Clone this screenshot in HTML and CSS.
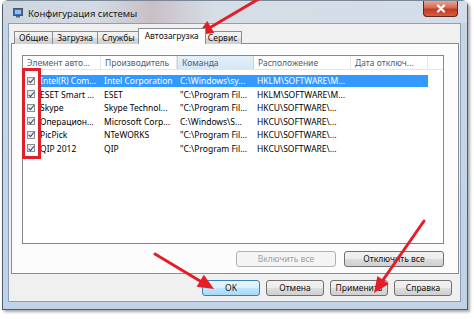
FILE: index.html
```html
<!DOCTYPE html>
<html>
<head>
    <title>Конфигурация системы</title>
    <link rel="stylesheet" href="styles.css">
</head>
<body>
    <div class="window">
        <div class="titlebar">
            <svg class="app-icon" width="10" height="10" viewBox="0 0 10 10">
                <rect x="0.5" y="0.5" width="9" height="7" fill="#3b6fb4" stroke="#4a5566"/>
                <rect x="2" y="2" width="6" height="4" fill="#8fc0ef"/>
                <rect x="3" y="8" width="4" height="1.5" fill="#5b6676"/>
            </svg>
            <span class="title">Конфигурация системы</span>
            <div class="close">
                <svg width="10" height="9" viewBox="0 0 10 9">
                    <path d="M2 1.5 L8 7.5 M8 1.5 L2 7.5" stroke="#fff" stroke-width="2.2" stroke-linecap="round"/>
                </svg>
            </div>
        </div>
        <div class="client">
            <div class="tabs">
                <div class="tab">Общие</div>
                <div class="tab">Загрузка</div>
                <div class="tab">Службы</div>
                <div class="tab active">Автозагрузка</div>
                <div class="tab">Сервис</div>
            </div>
            <div class="panel">
                <div class="list">
                    <div class="list-head">
                        <div class="hcell c1">Элемент авто...</div>
                        <div class="hcell c2">Производитель</div>
                        <div class="hcell c3 sorted">Команда</div>
                        <div class="hcell c4">Расположение</div>
                        <div class="hcell c5">Дата отключ...</div>
                    </div>
                    <div class="row sel">
                        <span class="chk"></span>
                        <div class="cells">
                            <span class="d1">Intel(R) Com...</span>
                            <span class="d2">Intel Corporation</span>
                            <span class="d3">C:\Windows\sy...</span>
                            <span class="d4">HKLM\SOFTWARE\M...</span>
                            <span class="d5"></span>
                        </div>
                    </div>
                    <div class="row">
                        <span class="chk"></span>
                        <div class="cells">
                            <span class="d1">ESET Smart ...</span>
                            <span class="d2">ESET</span>
                            <span class="d3">"C:\Program Fil...</span>
                            <span class="d4">HKLM\SOFTWARE\M...</span>
                            <span class="d5"></span>
                        </div>
                    </div>
                    <div class="row">
                        <span class="chk"></span>
                        <div class="cells">
                            <span class="d1">Skype</span>
                            <span class="d2">Skype Technol...</span>
                            <span class="d3">"C:\Program Fil...</span>
                            <span class="d4">HKCU\SOFTWARE\...</span>
                            <span class="d5"></span>
                        </div>
                    </div>
                    <div class="row">
                        <span class="chk"></span>
                        <div class="cells">
                            <span class="d1">Операцион...</span>
                            <span class="d2">Microsoft Corp...</span>
                            <span class="d3">C:\Windows\S...</span>
                            <span class="d4">HKCU\SOFTWARE\...</span>
                            <span class="d5"></span>
                        </div>
                    </div>
                    <div class="row">
                        <span class="chk"></span>
                        <div class="cells">
                            <span class="d1">PicPick</span>
                            <span class="d2">NTeWORKS</span>
                            <span class="d3">"C:\Program Fil...</span>
                            <span class="d4">HKCU\SOFTWARE\...</span>
                            <span class="d5"></span>
                        </div>
                    </div>
                    <div class="row">
                        <span class="chk"></span>
                        <div class="cells">
                            <span class="d1">QIP 2012</span>
                            <span class="d2">QIP</span>
                            <span class="d3">"C:\Program Fil...</span>
                            <span class="d4">HKCU\SOFTWARE\...</span>
                            <span class="d5"></span>
                        </div>
                    </div>
                </div>
                <div class="panel-buttons">
                    <div class="btn wide disabled">Включить все</div>
                    <div class="btn wide">Отключить все</div>
                </div>
            </div>
            <div class="dialog-buttons">
                <div class="btn default">OK</div>
                <div class="btn">Отмена</div>
                <div class="btn">Применить</div>
                <div class="btn">Справка</div>
            </div>
        </div>
    </div>

    <!-- пометки поверх скриншота -->
    <svg class="marks" width="474" height="319" viewBox="0 0 474 319">
        <rect x="23.5" y="69.5" width="16" height="88" fill="none" stroke="#e0202a" stroke-width="3"/>
        <g stroke="#e41e26" stroke-width="3" stroke-linecap="round">
            <line x1="262" y1="-3" x2="211" y2="27"/>
            <line x1="155" y1="254" x2="200" y2="281"/>
            <line x1="424" y1="221" x2="383" y2="280"/>
        </g>
        <g fill="#e41e26">
            <polygon points="197,35 214.3,32.9 207.3,20.9"/>
            <polygon points="214,289 196.6,286.8 203.8,274.8"/>
            <polygon points="374,293 388.8,283.9 377.4,275.9"/>
        </g>
    </svg>
</body>
</html>
```

FILE: styles.css
```css
body {
    margin: 0;
    background: #ffffff;
    position: relative;
    width: 474px;
    height: 319px;
    overflow: hidden;
    font-family: "Noto Sans", "Open Sans", sans-serif;
    font-size: 9px;
    color: #000;
}

/* рамка окна */
.window {
    margin-left: 2px;
    width: 466px;
    height: 310px;
    box-sizing: border-box;
    border: 1px solid #4e5d6e;
    border-top-color: #7a8796;
    border-radius: 6px 6px 0 0;
    background: linear-gradient(#c8d3df, #c5d6e8 30%, #bfd2e7);
    padding: 0 6px 6px 5px;
    box-shadow: 2px 2px 3px rgba(0, 0, 0, 0.35);
}

.titlebar {
    height: 22px;
    display: flex;
    align-items: center;
    background: linear-gradient(90deg, #cdd6e0 0%, #d4dbe4 20%, #c9bfc6 32%, #d6dde6 45%, #d3dde8 100%);
    margin: 0 -6px 0 -5px;
    padding: 0 9px 0 10px;
}

.app-icon {
    margin-top: 2px;
}

.title {
    margin-left: 5px;
    margin-top: 3px;
    font-size: 9.5px;
    color: #1a1a1a;
}

.close {
    margin-left: auto;
    align-self: flex-start;
    width: 35px;
    height: 16px;
    box-sizing: border-box;
    border: 1px solid #5d2a20;
    border-top: none;
    border-radius: 0 0 4px 4px;
    background: linear-gradient(#e8a496, #d46a55 45%, #c23a22 55%, #d65d3e);
    display: flex;
    align-items: center;
    justify-content: center;
}

/* клиентская область */
.client {
    height: 279px;
    box-sizing: border-box;
    border: 1px solid #8c9fb4;
    background: #f0f0f0;
    padding: 5px 2px 0 2px;
}

.tabs {
    display: flex;
    align-items: flex-end;
    height: 15px;
    padding-left: 4px;
    margin-bottom: -1px;
}

.tab {
    height: 13px;
    box-sizing: border-box;
    border: 1px solid #898c95;
    border-bottom: none;
    margin-left: -1px;
    padding: 0 4px;
    background: linear-gradient(#f3f3f3, #ebebeb 50%, #dddddd 50%, #cfcfcf);
    font-size: 8.5px;
    line-height: 12px;
    color: #111;
}

.tab.active {
    position: relative;
    z-index: 1;
    height: 16px;
    margin: 0 -2px 0 -2px;
    padding: 0 6px;
    background: #fff;
    line-height: 13px;
}

.panel {
    width: 448px;
    height: 231px;
    box-sizing: border-box;
    border: 1px solid #898c95;
    background: #fcfcfc;
    padding: 11px 0 0 10px;
}

.list {
    width: 422px;
    height: 189px;
    box-sizing: border-box;
    border: 1px solid #828790;
    background: #fff;
    font-size: 8.5px;
}

.list-head {
    display: flex;
    height: 13px;
    border-bottom: 1px solid #e5e5e5;
    color: #4c607a;
    margin-bottom: 4px;
}

.hcell {
    box-sizing: border-box;
    padding-left: 4px;
    line-height: 13px;
    border-right: 1px solid #e3e8ee;
    white-space: nowrap;
    overflow: hidden;
}

.hcell.sorted {
    background: linear-gradient(#e3f0fa, #d5e7f7);
    border-left: 1px solid #c0d5ea;
    border-right-color: #c0d5ea;
}

.c1 { width: 78px; }
.c2 { width: 76px; }
.c3 { width: 77px; }
.c4 { width: 97px; }
.c5 { width: 77px; }

.row {
    display: flex;
    align-items: center;
    height: 13.5px;
}

.chk {
    width: 8px;
    height: 8px;
    box-sizing: border-box;
    margin-left: 4px;
    margin-right: 3px;
    border: 1px solid #8e8f8f;
    background: linear-gradient(135deg, #e0e0e0, #fafafa);
    position: relative;
}

.chk::after {
    content: "";
    position: absolute;
    left: 1.5px;
    top: -0.5px;
    width: 2px;
    height: 4.5px;
    border: solid #1e3f7a;
    border-width: 0 1.5px 1.5px 0;
    transform: rotate(40deg);
}

.cells {
    display: flex;
    height: 12.5px;
    align-items: center;
    white-space: nowrap;
}

.cells span {
    overflow: hidden;
    box-sizing: border-box;
    padding-left: 3px;
}

.d1 { width: 63px; padding-left: 2px !important; }
.d2 { width: 76px; }
.d3 { width: 77px; }
.d4 { width: 97px; }
.d5 { width: 77px; }

.row.sel .cells {
    background: #3399ff;
    color: #fff;
}

/* кнопки */
.btn {
    width: 58px;
    height: 16px;
    box-sizing: border-box;
    border: 1px solid #707070;
    border-radius: 3px;
    background: linear-gradient(#f2f2f2, #ebebeb 50%, #dddddd 50%, #cfcfcf);
    font-size: 8.5px;
    line-height: 14px;
    text-align: center;
    color: #111;
}

.btn.wide {
    width: 100px;
}

.btn.disabled {
    border-color: #adb2b5;
    background: #f4f4f4;
    color: #a0a0a0;
}

.btn.default {
    border-color: #3c7fb1;
    background: linear-gradient(#eaf6fd, #d9f0fc 50%, #bee6fd 50%, #a7d9f5);
}

.panel-buttons {
    display: flex;
    gap: 8px;
    justify-content: flex-end;
    width: 422px;
    margin-top: 7px;
}

.dialog-buttons {
    display: flex;
    gap: 6px;
    justify-content: flex-end;
    margin-top: 6px;
    padding-right: 6px;
}

.marks {
    position: absolute;
    left: 0;
    top: 0;
    pointer-events: none;
}
```
